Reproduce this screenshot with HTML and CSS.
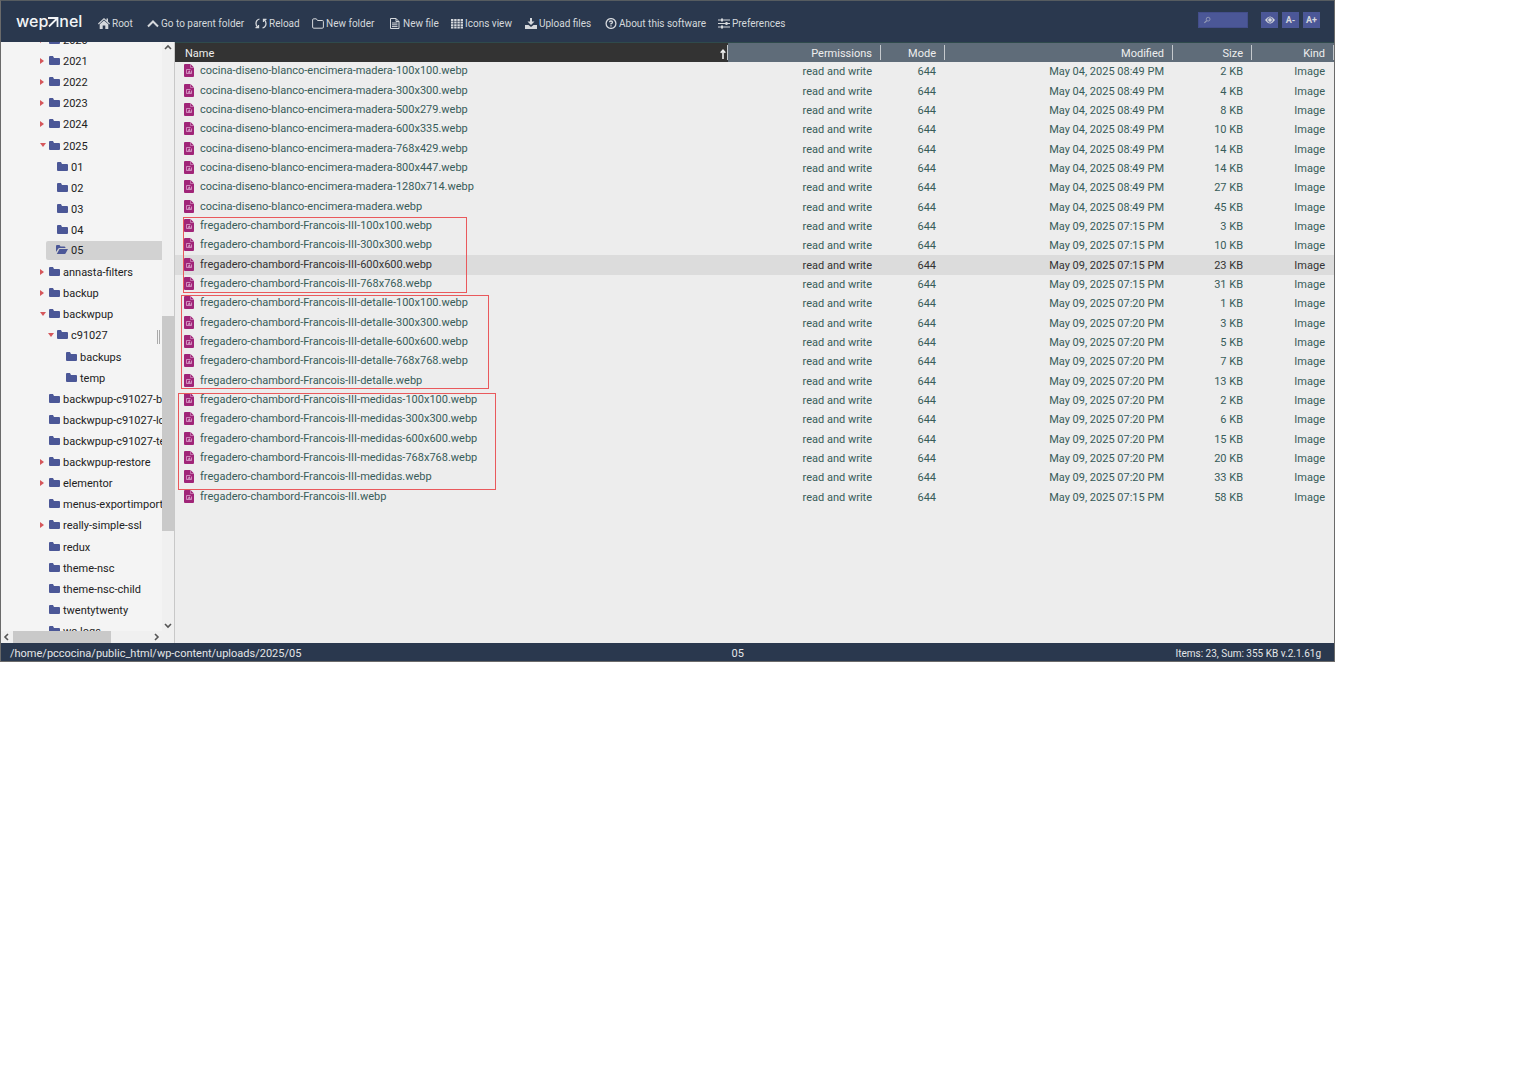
FILE: index.html
```html
<!DOCTYPE html>
<html lang="en">
<head>
  <meta charset="UTF-8" />
  <meta name="viewport" content="width=device-width, initial-scale=1.0"/>
  <title>wepanel file manager</title>
  <link rel="stylesheet" href="styles.css">
</head>
<body>
  <!-- Icon sprites -->
  <svg class="sprites" aria-hidden="true">
    <symbol id="folder" viewBox="0 0 11 9"><path d="M0 1Q0 0 1 0H4L5 2H10Q11 2 11 3V8Q11 9 10 9H1Q0 9 0 8Z"/></symbol>
    <symbol id="folder-open" viewBox="0 0 12 9"><path d="M0 7V1Q0 0 1 0H3.500L4.500 1.500H8.500Q9.500 1.500 9.500 3H3.500Q2.500 3 2 4Z"/><path d="M3.500 4H12L9.700 8.300Q9.400 9 8.600 9H.8Z"/></symbol>
    <symbol id="picture" viewBox="0 0 10 13"><path d="M1 0H6.500L10 3.500V12Q10 13 9 13H1Q0 13 0 12V1Q0 0 1 0Z"/><path d="M6.500 0V3.500H10" fill="none" stroke="#d9a3cb" stroke-width=".6"/><path d="M2.500 5.500H6.500M2.500 5.500V9.500H7.500V6.500" fill="none" stroke="#dba6ce" stroke-width=".8"/><path d="M3.500 8.700L5.300 6.300L6.800 8.700Z" fill="#dba6ce"/></symbol>
  </svg>

  <div class="app">
    <header class="topbar">
      <a class="logo" href="#" aria-label="wepanel">wep<svg viewBox="0 0 11 10" width="11" height="10"><path d="M0 1H9.500V10M9 1.500L1 9.500" fill="none" stroke="currentColor" stroke-width="1.800"/></svg>nel</a>

      <nav class="toolbar">
        <button type="button"><svg viewBox="0 0 12 11"><path d="M6 0L8.500 2.300V.5H10V3.700L12 5.600L11.300 6.400L6 1.600L.7 6.400L0 5.600Z"/><path d="M1.700 6.300L6 2.500L10.300 6.300V11H7.300V7.500H4.700V11H1.700Z"/></svg>Root</button>
        <button type="button"><svg viewBox="0 0 12 11"><path d="M1 8.500L6 3.500L11 8.500" class="line thick"/></svg>Go to parent folder</button>
        <button type="button"><svg viewBox="0 0 12 11"><path d="M4.500 1Q1 2 1 5.500Q1 8 3 9.500M.5 9.700H3.500V7M7.500 10Q11 9 11 5.500Q11 3 9 1.500M11.500 1.300H8.500V4" class="line"/></svg>Reload</button>
        <button type="button"><svg viewBox="0 0 12 11"><path d="M.6 9V2Q.6 .8 1.700 .8H4.300L5.500 2.500H10.300Q11.400 2.500 11.400 3.600V9Q11.400 10.200 10.300 10.200H1.700Q.6 10.200 .6 9Z" class="line thin"/></svg>New folder</button>
        <button type="button"><svg viewBox="0 0 12 11"><path d="M1.500 .5H7L10 3.500V10.500H1.500ZM7 .5V3.500H10M3 5H8.500M3 6.800H8.500M3 8.600H8.500" class="line thin"/></svg>New file</button>
        <button type="button"><svg viewBox="0 0 12 11"><path d="M0 1H2.400V3H0ZM3.200 1H5.600V3H3.200ZM6.400 1H8.800V3H6.400ZM9.600 1H12V3H9.600ZM0 3.600H2.400V5.600H0ZM3.200 3.600H5.600V5.600H3.200ZM6.400 3.600H8.800V5.600H6.400ZM9.600 3.600H12V5.600H9.600ZM0 6.200H2.400V8.200H0ZM3.200 6.200H5.600V8.200H3.200ZM6.400 6.200H8.800V8.200H6.400ZM9.600 6.200H12V8.200H9.600ZM0 8.800H2.400V10.500H0ZM3.200 8.800H5.600V10.500H3.200ZM6.400 8.800H8.800V10.500H6.400ZM9.600 8.800H12V10.500H9.600Z"/></svg>Icons view</button>
        <button type="button"><svg viewBox="0 0 12 11"><path d="M5 0H7V3.500H9.500L6 7L2.500 3.500H5Z"/><path d="M0 7H3.500L6 9L8.500 7H12V11H0Z"/></svg>Upload files</button>
        <button type="button"><svg viewBox="0 0 12 11"><circle cx="6" cy="5.500" r="4.900" class="line"/><path d="M4.500 4.300Q4.500 3 6 3Q7.500 3 7.500 4.200Q7.500 5 6 5.700V6.400M6 7.300V8.500" class="line"/></svg>About this software</button>
        <button type="button"><svg viewBox="0 0 12 11"><path d="M0 2H12M0 5.500H12M0 9H12" class="line thin"/><path d="M4 .6V3.400M8.500 4.100V6.900M4 7.600V10.400" class="line thick"/></svg>Preferences</button>
      </nav>

      <div class="tools">
        <label class="search">
          <svg viewBox="0 0 8 8" width="8" height="8"><circle cx="5" cy="3" r="2.300" fill="none" stroke="currentColor"/><path d="M3.300 4.700L.5 7.500" stroke="currentColor" stroke-width="1.400"/></svg>
          <input type="text" aria-label="Search">
        </label>
        <button type="button" aria-label="Show hidden files"><svg viewBox="0 0 10 8" width="10" height="8"><path d="M0 4Q5 -3 10 4Q5 11 0 4Z" fill="currentColor"/><circle cx="5" cy="4" r="2.300" fill="none" stroke="#4b5797" stroke-width=".9"/></svg></button>
        <button type="button">A-</button>
        <button type="button">A+</button>
      </div>
    </header>

    <main class="main">
      <aside class="sidebar">
        <div class="tree-view">
          <ul class="tree">
            <li class="closed"><svg><use href="#folder"/></svg>2020</li>
            <li class="closed"><svg><use href="#folder"/></svg>2021</li>
            <li class="closed"><svg><use href="#folder"/></svg>2022</li>
            <li class="closed"><svg><use href="#folder"/></svg>2023</li>
            <li class="closed"><svg><use href="#folder"/></svg>2024</li>
            <li class="open"><svg><use href="#folder"/></svg>2025</li>
            <li class="level-2"><svg><use href="#folder"/></svg>01</li>
            <li class="level-2"><svg><use href="#folder"/></svg>02</li>
            <li class="level-2"><svg><use href="#folder"/></svg>03</li>
            <li class="level-2"><svg><use href="#folder"/></svg>04</li>
            <li class="level-2 selected"><svg><use href="#folder-open"/></svg>05</li>
            <li class="closed"><svg><use href="#folder"/></svg>annasta-filters</li>
            <li class="closed"><svg><use href="#folder"/></svg>backup</li>
            <li class="open"><svg><use href="#folder"/></svg>backwpup</li>
            <li class="level-2 open"><svg><use href="#folder"/></svg>c91027</li>
            <li class="level-3"><svg><use href="#folder"/></svg>backups</li>
            <li class="level-3"><svg><use href="#folder"/></svg>temp</li>
            <li><svg><use href="#folder"/></svg>backwpup-c91027-backups</li>
            <li><svg><use href="#folder"/></svg>backwpup-c91027-logs</li>
            <li><svg><use href="#folder"/></svg>backwpup-c91027-temp</li>
            <li class="closed"><svg><use href="#folder"/></svg>backwpup-restore</li>
            <li class="closed"><svg><use href="#folder"/></svg>elementor</li>
            <li><svg><use href="#folder"/></svg>menus-exportimport</li>
            <li class="closed"><svg><use href="#folder"/></svg>really-simple-ssl</li>
            <li><svg><use href="#folder"/></svg>redux</li>
            <li><svg><use href="#folder"/></svg>theme-nsc</li>
            <li><svg><use href="#folder"/></svg>theme-nsc-child</li>
            <li><svg><use href="#folder"/></svg>twentytwenty</li>
            <li><svg><use href="#folder"/></svg>wc-logs</li>
          </ul>
          <span class="resizer"></span>
        </div>
        <div class="scroll-y">
          <svg viewBox="0 0 8 6" width="8" height="6"><path d="M1 5L4 2L7 5"/></svg>
          <span class="thumb"></span>
          <svg viewBox="0 0 8 6" width="8" height="6"><path d="M1 1L4 4L7 1"/></svg>
        </div>
        <div class="scroll-x">
          <svg viewBox="0 0 6 8" width="6" height="8"><path d="M5 1L2 4L5 7"/></svg>
          <span class="thumb"></span>
          <svg viewBox="0 0 6 8" width="6" height="8"><path d="M1 1L4 4L1 7"/></svg>
        </div>
      </aside>

      <section class="files">
        <table>
          <colgroup>
            <col>
            <col class="col-permissions">
            <col class="col-mode">
            <col class="col-modified">
            <col class="col-size">
            <col class="col-kind">
          </colgroup>
          <thead>
            <tr>
              <th class="sorted"><span>Name<svg viewBox="0 0 6 10" width="6" height="10"><path d="M3 10V1.500M.7 3.800L3 1.300L5.300 3.800" fill="none" stroke="currentColor" stroke-width="1.600"/></svg></span></th>
              <th>Permissions</th><th>Mode</th><th>Modified</th><th>Size</th><th>Kind</th>
            </tr>
          </thead>
          <tbody>
            <tr><td><svg><use href="#picture"/></svg>cocina-diseno-blanco-encimera-madera-100x100.webp</td><td>read and write</td><td>644</td><td>May 04, 2025 08:49 PM</td><td>2 KB</td><td>Image</td></tr>
            <tr><td><svg><use href="#picture"/></svg>cocina-diseno-blanco-encimera-madera-300x300.webp</td><td>read and write</td><td>644</td><td>May 04, 2025 08:49 PM</td><td>4 KB</td><td>Image</td></tr>
            <tr><td><svg><use href="#picture"/></svg>cocina-diseno-blanco-encimera-madera-500x279.webp</td><td>read and write</td><td>644</td><td>May 04, 2025 08:49 PM</td><td>8 KB</td><td>Image</td></tr>
            <tr><td><svg><use href="#picture"/></svg>cocina-diseno-blanco-encimera-madera-600x335.webp</td><td>read and write</td><td>644</td><td>May 04, 2025 08:49 PM</td><td>10 KB</td><td>Image</td></tr>
            <tr><td><svg><use href="#picture"/></svg>cocina-diseno-blanco-encimera-madera-768x429.webp</td><td>read and write</td><td>644</td><td>May 04, 2025 08:49 PM</td><td>14 KB</td><td>Image</td></tr>
            <tr><td><svg><use href="#picture"/></svg>cocina-diseno-blanco-encimera-madera-800x447.webp</td><td>read and write</td><td>644</td><td>May 04, 2025 08:49 PM</td><td>14 KB</td><td>Image</td></tr>
            <tr><td><svg><use href="#picture"/></svg>cocina-diseno-blanco-encimera-madera-1280x714.webp</td><td>read and write</td><td>644</td><td>May 04, 2025 08:49 PM</td><td>27 KB</td><td>Image</td></tr>
            <tr><td><svg><use href="#picture"/></svg>cocina-diseno-blanco-encimera-madera.webp</td><td>read and write</td><td>644</td><td>May 04, 2025 08:49 PM</td><td>45 KB</td><td>Image</td></tr>
            <tr><td><svg><use href="#picture"/></svg>fregadero-chambord-Francois-III-100x100.webp</td><td>read and write</td><td>644</td><td>May 09, 2025 07:15 PM</td><td>3 KB</td><td>Image</td></tr>
            <tr><td><svg><use href="#picture"/></svg>fregadero-chambord-Francois-III-300x300.webp</td><td>read and write</td><td>644</td><td>May 09, 2025 07:15 PM</td><td>10 KB</td><td>Image</td></tr>
            <tr class="hover"><td><svg><use href="#picture"/></svg>fregadero-chambord-Francois-III-600x600.webp</td><td>read and write</td><td>644</td><td>May 09, 2025 07:15 PM</td><td>23 KB</td><td>Image</td></tr>
            <tr><td><svg><use href="#picture"/></svg>fregadero-chambord-Francois-III-768x768.webp</td><td>read and write</td><td>644</td><td>May 09, 2025 07:15 PM</td><td>31 KB</td><td>Image</td></tr>
            <tr><td><svg><use href="#picture"/></svg>fregadero-chambord-Francois-III-detalle-100x100.webp</td><td>read and write</td><td>644</td><td>May 09, 2025 07:20 PM</td><td>1 KB</td><td>Image</td></tr>
            <tr><td><svg><use href="#picture"/></svg>fregadero-chambord-Francois-III-detalle-300x300.webp</td><td>read and write</td><td>644</td><td>May 09, 2025 07:20 PM</td><td>3 KB</td><td>Image</td></tr>
            <tr><td><svg><use href="#picture"/></svg>fregadero-chambord-Francois-III-detalle-600x600.webp</td><td>read and write</td><td>644</td><td>May 09, 2025 07:20 PM</td><td>5 KB</td><td>Image</td></tr>
            <tr><td><svg><use href="#picture"/></svg>fregadero-chambord-Francois-III-detalle-768x768.webp</td><td>read and write</td><td>644</td><td>May 09, 2025 07:20 PM</td><td>7 KB</td><td>Image</td></tr>
            <tr><td><svg><use href="#picture"/></svg>fregadero-chambord-Francois-III-detalle.webp</td><td>read and write</td><td>644</td><td>May 09, 2025 07:20 PM</td><td>13 KB</td><td>Image</td></tr>
            <tr><td><svg><use href="#picture"/></svg>fregadero-chambord-Francois-III-medidas-100x100.webp</td><td>read and write</td><td>644</td><td>May 09, 2025 07:20 PM</td><td>2 KB</td><td>Image</td></tr>
            <tr><td><svg><use href="#picture"/></svg>fregadero-chambord-Francois-III-medidas-300x300.webp</td><td>read and write</td><td>644</td><td>May 09, 2025 07:20 PM</td><td>6 KB</td><td>Image</td></tr>
            <tr><td><svg><use href="#picture"/></svg>fregadero-chambord-Francois-III-medidas-600x600.webp</td><td>read and write</td><td>644</td><td>May 09, 2025 07:20 PM</td><td>15 KB</td><td>Image</td></tr>
            <tr><td><svg><use href="#picture"/></svg>fregadero-chambord-Francois-III-medidas-768x768.webp</td><td>read and write</td><td>644</td><td>May 09, 2025 07:20 PM</td><td>20 KB</td><td>Image</td></tr>
            <tr><td><svg><use href="#picture"/></svg>fregadero-chambord-Francois-III-medidas.webp</td><td>read and write</td><td>644</td><td>May 09, 2025 07:20 PM</td><td>33 KB</td><td>Image</td></tr>
            <tr><td><svg><use href="#picture"/></svg>fregadero-chambord-Francois-III.webp</td><td>read and write</td><td>644</td><td>May 09, 2025 07:15 PM</td><td>58 KB</td><td>Image</td></tr>
          </tbody>
        </table>

        <!-- Marked file groups -->
        <span class="mark mark-main"></span>
        <span class="mark mark-detalle"></span>
        <span class="mark mark-medidas"></span>
      </section>
    </main>

    <footer class="statusbar">
      <span>/home/pccocina/public_html/wp-content/uploads/2025/05</span>
      <span>05</span>
      <span class="summary">Items: 23, Sum: 355 KB v.2.1.61g</span>
    </footer>
  </div>
</body>
</html>
```
FILE: styles.css
```css
:root {
  --navy: #2a384e;
  --slate: #5f6c79;
  --indigo: #4b5797;
  --panel: #ededed;
  --sidebar: #f4f4f4;
  --text: #385c59;
  --red: #e9595c;
}

/* Reset */
* { margin: 0; padding: 0; box-sizing: border-box; }

body {
  font-family: Roboto, sans-serif;
  font-size: 11px;
  background: #fff;
  padding-right: 179px;
}
button, input { font: inherit; color: inherit; border: none; background: none; }
.sprites { display: none; }

.app {
  border: 1px solid #6a6a6a;
  border-top-color: #565c60;
}

/* Top bar */
.topbar {
  display: flex;
  height: 41px;
  padding: 0 14px 0 15px;
  background: var(--navy);
  color: #d5d8dc;
}
.logo {
  display: flex;
  align-items: center;
  width: 82px;
  padding-bottom: 2px;
  font: 500 16px Inter, sans-serif;
  color: #f2f4f6;
  text-decoration: none;
}
.logo svg { margin-top: 3px; }

.toolbar {
  display: grid;
  grid-template-columns: 49px 108px 57px 77px 62px 74px 80px 113px auto;
  align-items: center;
  padding-top: 4px;
}
.toolbar button {
  display: flex;
  align-items: center;
  gap: 2px;
  font-size: 10px;
  white-space: nowrap;
  cursor: pointer;
}
.toolbar svg {
  width: 12px;
  height: 11px;
  flex: none;
  fill: currentColor;
}
.toolbar .line { fill: none; stroke: currentColor; stroke-width: 1.3; }
.toolbar .thin { stroke-width: 1; }
.toolbar .thick { stroke-width: 2; }

.tools {
  display: flex;
  align-items: flex-start;
  gap: 4px;
  margin-left: auto;
  padding-top: 11px;
}
.tools button {
  display: flex;
  align-items: center;
  justify-content: center;
  width: 17px;
  height: 16px;
  background: var(--indigo);
  font-size: 9px;
  font-weight: 700;
}
.search {
  display: flex;
  align-items: center;
  width: 50px;
  height: 16px;
  margin-right: 9px;
  padding: 0 5px;
  border: 1px solid #434e8a;
  background: var(--indigo);
  color: #9aa0b8;
}
.search input { width: 100%; min-width: 0; outline: none; }

/* Folder tree */
.main { display: flex; height: 601px; }
.sidebar {
  display: grid;
  grid-template: 1fr 12px / 1fr 12px;
  width: 174px;
  flex: none;
  background: #f0f0f0;
  border-right: 1px solid #c8c8c8;
}
.tree-view {
  position: relative;
  overflow: hidden;
  background: var(--sidebar);
}
.tree {
  display: grid;
  grid-auto-rows: 1fr;
  height: 612px;
  margin-top: -12px;
  list-style: none;
  color: #222;
}
.tree li {
  display: flex;
  align-items: center;
  gap: 3px;
  padding-left: 48px;
  white-space: nowrap;
}
.tree li.level-2 { padding-left: 56px; }
.tree li.level-3 { padding-left: 65px; }
.tree svg {
  width: 11px;
  height: 9px;
  flex: none;
  margin-bottom: 2px;
  fill: var(--indigo);
}
.tree li::before {
  border: 3px solid transparent;
}
.tree li.closed, .tree li.open { padding-left: 39px; }
.tree li.level-2.open { padding-left: 47px; }
.tree li.closed::before {
  content: "";
  border-left: 4px solid #d5575b;
  border-right: 0;
  margin: 0 2px 2px 0;
}
.tree li.open::before {
  content: "";
  border-top: 4px solid #d5575b;
  border-bottom: 0;
  margin-bottom: 2px;
}
.tree li.selected {
  margin: 0 0 2px 45px;
  padding-left: 10px;
  background: #d2d2d2;
  border-radius: 2px 0 0 2px;
}
.tree .selected svg { width: 12px; }
.resizer {
  position: absolute;
  top: 288px;
  right: 2px;
  width: 3px;
  height: 14px;
  border: 1px solid #aaa;
  border-width: 0 1px;
}

/* Scrollbars */
.scroll-y, .scroll-x {
  display: flex;
  align-items: center;
  background: #f0f0f0;
}
.scroll-y {
  flex-direction: column;
  padding: 2px 0;
}
.scroll-x { padding: 0 2px; }
.scroll-y svg, .scroll-x svg {
  flex: none;
  fill: none;
  stroke: #555;
  stroke-width: 1.6;
}
.thumb { background: #c9c9c9; }
.scroll-y .thumb {
  width: 12px;
  height: 215px;
  margin: 266px 0 auto;
}
.scroll-x .thumb {
  width: 98px;
  height: 12px;
  margin: 0 auto 0 4px;
}

/* File list */
.files {
  position: relative;
  flex: 1;
  background: var(--panel);
  border-top: 1px solid #2f4a4c;
}
table {
  width: 100%;
  height: 464px;
  table-layout: fixed;
  border-collapse: collapse;
}
.col-permissions { width: 153px; }
.col-mode { width: 64px; }
.col-modified { width: 228px; }
.col-size { width: 79px; }
.col-kind { width: 82px; }

th {
  position: relative;
  height: 19px;
  padding: 2px 9px 0 0;
  background: var(--slate);
  color: #eee;
  font-weight: 400;
  text-align: right;
}
th::after {
  content: "";
  position: absolute;
  top: 2px;
  right: 0;
  width: 1px;
  height: 15px;
  background: #c5c9cd;
}
th.sorted {
  padding: 2px 2px 0 10px;
  background: #333;
}
.sorted span {
  display: flex;
  align-items: center;
  justify-content: space-between;
}
td {
  padding-right: 9px;
  color: var(--text);
  text-align: right;
  white-space: nowrap;
}
td:first-child { padding-left: 9px; text-align: left; }
td svg {
  width: 10px;
  height: 13px;
  margin: 0 6px 2px 0;
  vertical-align: middle;
  fill: #a02578;
}
.hover { background: #dcdcdc; }
.hover td { color: #333; }

.mark {
  position: absolute;
  border: 1px solid var(--red);
}
.mark-main { top: 174px; left: 8px; width: 284px; height: 76px; }
.mark-detalle { top: 252px; left: 6px; width: 308px; height: 94px; }
.mark-medidas { top: 350px; left: 3px; width: 318px; height: 97px; }

/* Status bar */
.statusbar {
  display: grid;
  grid-template-columns: 5fr auto 4fr;
  align-items: center;
  height: 18px;
  padding: 2px 13px 0 9px;
  background: var(--navy);
  color: #e4e6e8;
}
.summary { font-size: 10px; text-align: right; }
```
